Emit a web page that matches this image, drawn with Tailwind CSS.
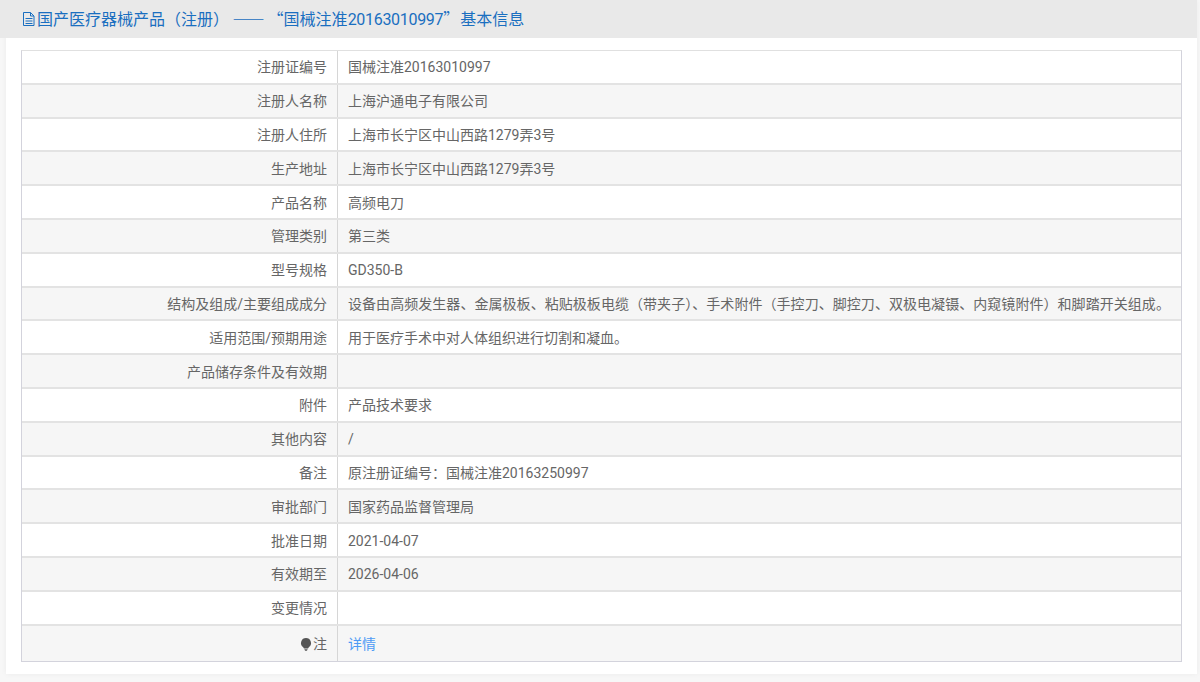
<!DOCTYPE html>
<html lang="zh-CN">
  <head>
    <meta charset="UTF-8" />
    <title>国产医疗器械产品（注册）</title>
    <script src="https://cdn.jsdelivr.net/npm/@tailwindcss/browser@4"></script>
  </head>
  <body class="h-[682px] overflow-hidden bg-[#f7f7f7] font-['Roboto','Noto_Sans_CJK_SC',sans-serif] text-[14px] text-[#666]">
    <div class="mx-[6px] h-[674px] w-[1191px] bg-white shadow-[0_0_6px_rgba(0,0,0,0.05)]">
      <h2 class="flex h-[38px] -mx-[6px] w-[1197px] items-center bg-[#e9e9e9] pl-[22px] pb-[1px] font-['Noto_Sans_CJK_SC',sans-serif] text-[16px] font-normal text-[#1a6fc0]">
        <svg class="mr-[1px] h-[14px] w-[14px]" viewBox="0 0 14 14" fill="none" stroke="#1a6fc0" stroke-width="1">
          <path d="M1.500 .5h7l3.500 3.500v9.500h-10.500z M8.500 .5v3.500h3.500 M3.500 6.500h7 M3.500 9h7 M3.500 11.500h7" />
        </svg>
        <span class="whitespace-pre">国产医疗器械产品（注册） <span class="mr-[3px]">——</span>“国械注准<span class="font-['Roboto'] tracking-[-0.3px]">20163010997</span>”<span class="ml-[1px]">基本信息</span></span>
      </h2>
      <div class="mx-[15px] mt-[12px] w-[1161px] border border-[#d3d3dc] border-t-[#e0e0e0] [&>div>div]:pt-[2px]">
        <div class="flex h-[33.8px] border-b-2 border-[#e3e3e3]">
          <div class="flex w-[316px] items-center justify-end border-r border-[#d6d6d6] pr-[10px]">注册证编号</div>
          <div class="flex flex-1 items-center pl-[10px]">国械注准20163010997</div>
        </div>
        <div class="flex h-[33.8px] border-b-2 border-[#e3e3e3] bg-[#f6f6f6]">
          <div class="flex w-[316px] items-center justify-end border-r border-[#d6d6d6] pr-[10px]">注册人名称</div>
          <div class="flex flex-1 items-center pl-[10px]">上海沪通电子有限公司</div>
        </div>
        <div class="flex h-[33.8px] border-b-2 border-[#e3e3e3]">
          <div class="flex w-[316px] items-center justify-end border-r border-[#d6d6d6] pr-[10px]">注册人住所</div>
          <div class="flex flex-1 items-center pl-[10px]">上海市长宁区中山西路1279弄3号</div>
        </div>
        <div class="flex h-[33.8px] border-b-2 border-[#e3e3e3] bg-[#f6f6f6]">
          <div class="flex w-[316px] items-center justify-end border-r border-[#d6d6d6] pr-[10px]">生产地址</div>
          <div class="flex flex-1 items-center pl-[10px]">上海市长宁区中山西路1279弄3号</div>
        </div>
        <div class="flex h-[33.8px] border-b-2 border-[#e3e3e3]">
          <div class="flex w-[316px] items-center justify-end border-r border-[#d6d6d6] pr-[10px]">产品名称</div>
          <div class="flex flex-1 items-center pl-[10px]">高频电刀</div>
        </div>
        <div class="flex h-[33.8px] border-b-2 border-[#e3e3e3] bg-[#f6f6f6]">
          <div class="flex w-[316px] items-center justify-end border-r border-[#d6d6d6] pr-[10px]">管理类别</div>
          <div class="flex flex-1 items-center pl-[10px]">第三类</div>
        </div>
        <div class="flex h-[33.8px] border-b-2 border-[#e3e3e3]">
          <div class="flex w-[316px] items-center justify-end border-r border-[#d6d6d6] pr-[10px]">型号规格</div>
          <div class="flex flex-1 items-center pl-[10px]">GD350-B</div>
        </div>
        <div class="flex h-[33.8px] border-b-2 border-[#e3e3e3] bg-[#f6f6f6]">
          <div class="flex w-[316px] items-center justify-end border-r border-[#d6d6d6] pr-[10px]">结构及组成/主要组成成分</div>
          <div class="flex flex-1 items-center pl-[10px] tracking-[0.05px]">设备由高频发生器、金属极板、粘贴极板电缆（带夹子）、手术附件（手控刀、脚控刀、双极电凝镊、内窥镜附件）和脚踏开关组成。</div>
        </div>
        <div class="flex h-[33.8px] border-b-2 border-[#e3e3e3]">
          <div class="flex w-[316px] items-center justify-end border-r border-[#d6d6d6] pr-[10px]">适用范围/预期用途</div>
          <div class="flex flex-1 items-center pl-[10px]">用于医疗手术中对人体组织进行切割和凝血。</div>
        </div>
        <div class="flex h-[33.8px] border-b-2 border-[#e3e3e3] bg-[#f6f6f6]">
          <div class="flex w-[316px] items-center justify-end border-r border-[#d6d6d6] pr-[10px]">产品储存条件及有效期</div>
          <div class="flex flex-1 items-center pl-[10px]"></div>
        </div>
        <div class="flex h-[33.8px] border-b-2 border-[#e3e3e3]">
          <div class="flex w-[316px] items-center justify-end border-r border-[#d6d6d6] pr-[10px]">附件</div>
          <div class="flex flex-1 items-center pl-[10px]">产品技术要求</div>
        </div>
        <div class="flex h-[33.8px] border-b-2 border-[#e3e3e3] bg-[#f6f6f6]">
          <div class="flex w-[316px] items-center justify-end border-r border-[#d6d6d6] pr-[10px]">其他内容</div>
          <div class="flex flex-1 items-center pl-[10px]">/</div>
        </div>
        <div class="flex h-[33.8px] border-b-2 border-[#e3e3e3]">
          <div class="flex w-[316px] items-center justify-end border-r border-[#d6d6d6] pr-[10px]">备注</div>
          <div class="flex flex-1 items-center pl-[10px]">原注册证编号：国械注准20163250997</div>
        </div>
        <div class="flex h-[33.8px] border-b-2 border-[#e3e3e3] bg-[#f6f6f6]">
          <div class="flex w-[316px] items-center justify-end border-r border-[#d6d6d6] pr-[10px]">审批部门</div>
          <div class="flex flex-1 items-center pl-[10px]">国家药品监督管理局</div>
        </div>
        <div class="flex h-[33.8px] border-b-2 border-[#e3e3e3]">
          <div class="flex w-[316px] items-center justify-end border-r border-[#d6d6d6] pr-[10px]">批准日期</div>
          <div class="flex flex-1 items-center pl-[10px]">2021-04-07</div>
        </div>
        <div class="flex h-[33.8px] border-b-2 border-[#e3e3e3] bg-[#f6f6f6]">
          <div class="flex w-[316px] items-center justify-end border-r border-[#d6d6d6] pr-[10px]">有效期至</div>
          <div class="flex flex-1 items-center pl-[10px]">2026-04-06</div>
        </div>
        <div class="flex h-[33.8px] border-b-2 border-[#e3e3e3]">
          <div class="flex w-[316px] items-center justify-end border-r border-[#d6d6d6] pr-[10px]">变更情况</div>
          <div class="flex flex-1 items-center pl-[10px]"></div>
        </div>
        <div class="flex h-[35.4px] bg-[#f6f6f6]">
          <div class="flex w-[316px] items-center justify-end border-r border-[#d6d6d6] pr-[10px]">
            <svg class="mr-[1px] h-[13px] w-[12px]" viewBox="0 0 11 13" fill="#555">
              <path d="M5.500 0a5 5 0 0 1 3 9L7.500 10.500h-4L2.500 9a5 5 0 0 1 3-9z M3.800 11.200h3.400l-.8 1.600H4.600z" />
            </svg>
            <span>注</span>
          </div>
          <div class="flex flex-1 items-center pl-[10px]"><a href="#" class="text-[#4d9bf5]">详情</a></div>
        </div>
      </div>
    </div>
  </body>
</html>
